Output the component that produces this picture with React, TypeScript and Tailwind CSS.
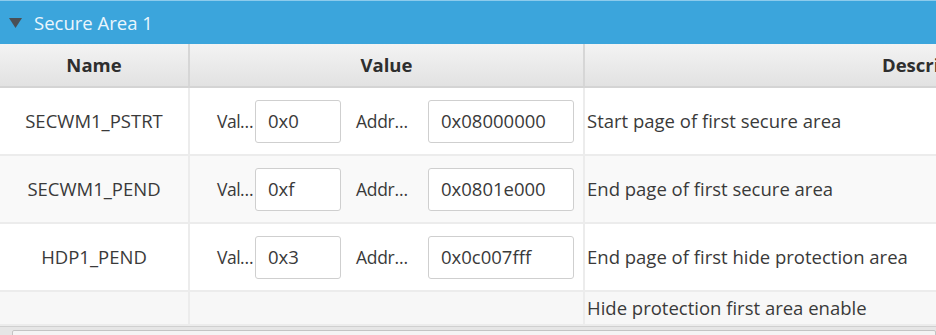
import React from 'react';

interface Row {
  name: string;
  value?: string;
  addr?: string;
  desc: string;
}

const rows: Row[] = [
  { name: 'SECWM1_PSTRT', value: '0x0', addr: '0x08000000', desc: 'Start page of first secure area' },
  { name: 'SECWM1_PEND', value: '0xf', addr: '0x0801e000', desc: 'End page of first secure area' },
  { name: 'HDP1_PEND', value: '0x3', addr: '0x0c007fff', desc: 'End page of first hide protection area' },
  { name: '', desc: 'Hide protection first area enable' },
];

const font = { fontFamily: '"Open Sans", "Noto Sans", sans-serif' };

const App: React.FC = () => {
  return (
    <div className="w-[936px] h-[335px] overflow-hidden bg-white text-[#3a3a3a]" style={font}>
      {/* Section title bar */}
      <div className="h-[44px] bg-[#3ba5dc] border-t border-[#8ccbec] flex items-center pl-[9px] gap-[12px]">
        <svg width="13" height="10" viewBox="0 0 13 10">
          <path d="M0 0 H13 L6.5 10 Z" fill="#4a4f55" />
        </svg>
        <span className="text-[18.5px] text-[#eaf6fd]">Secure Area 1</span>
      </div>

      {/* Column headers */}
      <div className="grid grid-cols-[190px_395px_1fr] h-[44px] bg-gradient-to-b from-[#f3f3f3] to-[#e2e2e2] border-b-[2px] border-[#d4d4d4]">
        <div className="flex items-center justify-center border-r-[2px] border-[#d6d6d6] font-bold text-[18.5px] text-[#2e2e2e]">Name</div>
        <div className="flex items-center justify-center border-r-[2px] border-[#d6d6d6] font-bold text-[18.5px] text-[#2e2e2e]">Value</div>
        <div className="flex items-center pl-[297px] font-bold text-[18.5px] text-[#2e2e2e] whitespace-nowrap overflow-hidden">Description</div>
      </div>

      {/* Rows */}
      {rows.map((r, i) => (
        <div
          key={i}
          className={`grid grid-cols-[190px_395px_1fr] border-b-[2px] border-[#ececec] ${
            i === 3 ? 'h-[34px] bg-[#f7f7f7]' : i === 1 ? 'h-[68px] bg-[#f9f9f9]' : 'h-[68px] bg-white'
          }`}
        >
          <div className="flex items-center justify-center border-r-[2px] border-[#ececec] text-[18.5px]">{r.name}</div>
          <div className="flex items-center border-r-[2px] border-[#ececec] pl-[27px]">
            {r.value && (
              <>
                <span className="w-[37px] text-[17.5px] tracking-[-0.5px] whitespace-nowrap">Val…</span>
                <div className="w-[86px] h-[43px] ml-[1px] bg-white border border-[#cfcfcf] rounded-[3px] flex items-center pl-[12px] text-[18.5px]">
                  {r.value}
                </div>
                <span className="ml-[15px] w-[72px] text-[17.5px] tracking-[-0.3px] whitespace-nowrap">Addr…</span>
                <div className="w-[146px] h-[43px] bg-white border border-[#cfcfcf] rounded-[3px] flex items-center pl-[12px] text-[18.5px]">
                  {r.addr}
                </div>
              </>
            )}
          </div>
          <div className="flex items-center pl-[2px] text-[18.5px] whitespace-nowrap">{r.desc}</div>
        </div>
      ))}

      {/* Horizontal scrollbar */}
      <div className="h-[12px] bg-[#e6e6e6] border-t border-[#d0d0d0] flex items-end">
        <div className="w-[12px]" />
        <div className="flex-1 h-[8px] bg-[#f4f4f4] border border-[#c4c4c4] rounded-t-[2px]" />
      </div>
    </div>
  );
};

export default App;
